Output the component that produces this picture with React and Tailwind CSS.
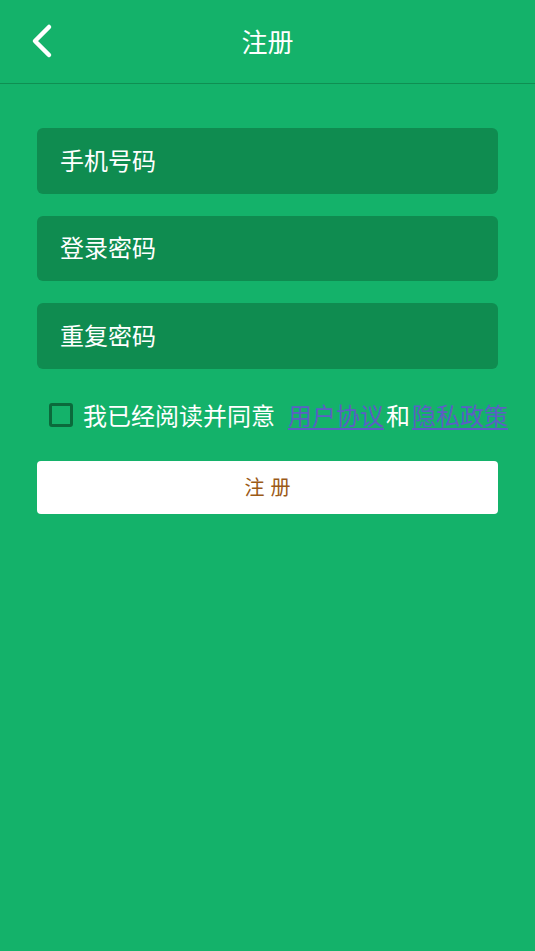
import React, { useState } from 'react';

const font = { fontFamily: '"Noto Sans CJK SC", "Noto Sans", sans-serif' };

function Field({ placeholder, type = 'text' }) {
  return (
    <input
      type={type}
      placeholder={placeholder}
      className="h-[65.5px] w-full rounded-md bg-[#0f8c50] px-[23px] pb-[3px] text-[24px] text-white outline-none placeholder:text-white"
      style={font}
    />
  );
}

export default function App() {
  const [agreed, setAgreed] = useState(false);

  return (
    <div className="min-h-[951px] w-full bg-[#14b26a] text-white" style={font}>
      {/* header */}
      <div className="relative flex h-[84px] items-center justify-center border-b border-[#0f8f52]">
        <button type="button" className="absolute left-[26px] top-[19px] p-1">
          <svg width="24" height="38" viewBox="0 0 24 38" fill="none">
            <path d="M19 4 L5 18 L19 32" stroke="white" strokeWidth="4.5" strokeLinecap="round" strokeLinejoin="round" />
          </svg>
        </button>
        <div className="pb-[2px] text-[26px] leading-none">注册</div>
      </div>

      <div className="flex flex-col px-[37px] pt-[44px]">
        <div className="flex flex-col gap-[22px]">
          <Field placeholder="手机号码" />
          <Field placeholder="登录密码" type="password" />
          <Field placeholder="重复密码" type="password" />
        </div>

        {/* agreement */}
        <div className="mt-[34px] flex items-center whitespace-nowrap pl-[12px] text-[24px] leading-none">
          <button
            type="button"
            onClick={() => setAgreed(!agreed)}
            className="mr-[10px] h-[24px] w-[24px] shrink-0 rounded-[3px] border-[3px] border-[#0b6a3b]"
          >
            {agreed && <span className="block h-full w-full bg-[#0b6a3b]" />}
          </button>
          <span>我已经阅读并同意</span>
          <a href="#" className="ml-[13px] text-[#5c5fc4] underline underline-offset-[3px]">用户协议</a>
          <span className="mx-[2px]">和</span>
          <a href="#" className="text-[#5c5fc4] underline underline-offset-[3px]">隐私政策</a>
        </div>

        <button
          type="button"
          className="mt-[34px] h-[53px] w-full rounded-[4px] bg-white pl-[6px] text-[20px] tracking-[6px] text-[#9b5a17]"
        >
          注册
        </button>
      </div>
    </div>
  );
}
